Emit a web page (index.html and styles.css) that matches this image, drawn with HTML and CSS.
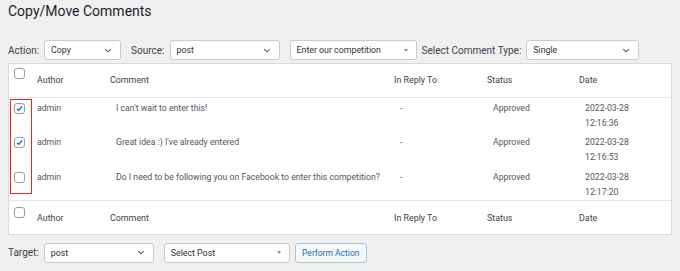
FILE: index.html
```html
<!DOCTYPE html>
<html lang="en">
<head>
    <meta charset="UTF-8">
    <title>Copy/Move Comments</title>
    <link rel="stylesheet" href="styles.css">
</head>
<body>
    <div class="wrap">
        <h1 class="page-title">Copy/Move Comments</h1>

        <div class="toolbar">
            <label class="field-label">Action:</label>
            <div class="select select-action"><span>Copy</span><svg class="chev" viewBox="0 0 10 6"><path d="M1.5 1.2 5 4.6 8.5 1.2"/></svg></div>
            <label class="field-label">Source:</label>
            <div class="select select-source"><span>post</span><svg class="chev" viewBox="0 0 10 6"><path d="M1.5 1.2 5 4.6 8.5 1.2"/></svg></div>
            <div class="select select-post"><span>Enter our competition</span><i class="tri"></i></div>
            <label class="field-label">Select Comment Type:</label>
            <div class="select select-type"><span>Single</span><svg class="chev" viewBox="0 0 10 6"><path d="M1.5 1.2 5 4.6 8.5 1.2"/></svg></div>
        </div>

        <div class="table-box">
            <table class="comments">
                <colgroup>
                    <col class="c-check">
                    <col class="c-author">
                    <col class="c-comment">
                    <col class="c-reply">
                    <col class="c-status">
                    <col>
                </colgroup>
                <thead>
                    <tr>
                        <th class="check"><span class="cb"></span></th>
                        <th>Author</th>
                        <th>Comment</th>
                        <th>In Reply To</th>
                        <th>Status</th>
                        <th>Date</th>
                    </tr>
                </thead>
                <tbody>
                    <tr>
                        <td class="check"><span class="cb checked"><svg viewBox="0 0 12 12"><path d="M2.6 6.2 5 8.4 9.6 3.4"/></svg></span></td>
                        <td class="author">admin</td>
                        <td>I can't wait to enter this!</td>
                        <td>-</td>
                        <td>Approved</td>
                        <td>2022-03-28<br>12:16:36</td>
                    </tr>
                    <tr>
                        <td class="check"><span class="cb checked"><svg viewBox="0 0 12 12"><path d="M2.6 6.2 5 8.4 9.6 3.4"/></svg></span></td>
                        <td class="author">admin</td>
                        <td>Great idea :) I've already entered</td>
                        <td>-</td>
                        <td>Approved</td>
                        <td>2022-03-28<br>12:16:53</td>
                    </tr>
                    <tr class="last">
                        <td class="check"><span class="cb"></span></td>
                        <td class="author">admin</td>
                        <td>Do I need to be following you on Facebook to enter this competition?</td>
                        <td>-</td>
                        <td>Approved</td>
                        <td>2022-03-28<br>12:17:20</td>
                    </tr>
                </tbody>
                <tfoot>
                    <tr>
                        <th class="check"><span class="cb"></span></th>
                        <th>Author</th>
                        <th>Comment</th>
                        <th>In Reply To</th>
                        <th>Status</th>
                        <th>Date</th>
                    </tr>
                </tfoot>
            </table>
            <div class="highlight"></div>
        </div>

        <div class="toolbar bottom">
            <label class="field-label">Target:</label>
            <div class="select select-target"><span>post</span><svg class="chev" viewBox="0 0 10 6"><path d="M1.5 1.2 5 4.6 8.5 1.2"/></svg></div>
            <div class="select select-dest"><span>Select Post</span><i class="tri"></i></div>
            <button type="button" class="action-btn">Perform Action</button>
        </div>
    </div>
</body>
</html>
```

FILE: styles.css
```css
body {
    margin: 0;
    background: #f0f0f1;
    font-family: Roboto, "Liberation Sans", sans-serif;
    color: #3c434a;
}
.wrap {
    padding: 0 8px;
}
.page-title {
    margin: 0;
    padding-top: 1px;
    height: 38px;
    font-size: 14px;
    font-weight: 400;
    color: #1d2327;
    line-height: 20px;
}
.toolbar {
    display: flex;
    align-items: center;
    height: 22px;
    margin-bottom: 2px;
    font-size: 10px;
    white-space: nowrap;
}
.field-label {
    color: #3c434a;
    margin-right: 5px;
}
.select {
    box-sizing: border-box;
    height: 20px;
    display: flex;
    align-items: center;
    justify-content: space-between;
    padding: 0 8px 0 6px;
    background: #fff;
    border: 1px solid #c9cbcf;
    border-radius: 3px;
    color: #2c3338;
    font-size: 8.8px;
    margin-right: 10px;
}
.chev {
    width: 8px;
    height: 5px;
    fill: none;
    stroke: #50575e;
    stroke-width: 1.3;
}
.tri {
    width: 0;
    height: 0;
    border-left: 2.5px solid transparent;
    border-right: 2.5px solid transparent;
    border-top: 3px solid #8c8f94;
}
.select-action { width: 77px; }
.select-source { width: 110px; }
.select-post { width: 127px; margin-right: 5px; }
.select-type { width: 113px; }
.select-target { width: 110px; }
.select-dest { width: 126px; margin-right: 5px; }

.table-box {
    position: relative;
    background: #fff;
    border: 1px solid #dcdcde;
    box-sizing: border-box;
    width: 664px;
}
.comments {
    width: 100%;
    border-collapse: collapse;
    table-layout: fixed;
    font-size: 8.7px;
    white-space: nowrap;
}
.c-check { width: 22px; }
.c-author { width: 73px; }
.c-comment { width: 284px; }
.c-reply { width: 93px; }
.c-status { width: 92px; }
.comments thead tr {
    height: 33px;
    border-bottom: 1px solid #e5e5e7;
}
.comments tbody tr {
    height: 35px;
}
.comments tbody tr.last {
    height: 33px;
}
.comments tfoot tr {
    height: 33px;
    border-top: 1px solid #e5e5e7;
}
.comments th {
    font-weight: 400;
    font-size: 8.9px;
    text-align: left;
    color: #3c434a;
    padding: 0 0 0 6px;
}
.comments tfoot th {
    vertical-align: top;
    padding-top: 12px;
}
.comments td {
    vertical-align: top;
    padding: 3px 0 0 12px;
    line-height: 15px;
    color: #50575e;
}
.comments td.author {
    padding-left: 6px;
}
.comments .check {
    padding: 0 0 0 5px;
}
.comments th.check {
    vertical-align: top;
    padding-top: 4px;
}
.comments tfoot th.check {
    padding-top: 6px;
}
.comments td.check {
    padding-top: 5px;
}
.cb {
    box-sizing: border-box;
    display: block;
    width: 11px;
    height: 11px;
    border: 1px solid #9a9ea4;
    border-radius: 3px;
    background: #fff;
}
.cb svg {
    display: block;
    width: 9px;
    height: 9px;
    fill: none;
    stroke: #2271b1;
    stroke-width: 1.8;
}
.highlight {
    position: absolute;
    left: 1px;
    top: 35px;
    width: 22px;
    height: 95px;
    box-sizing: border-box;
    border: 1.5px solid #e8261f;
}
.toolbar.bottom {
    margin-top: 7px;
}
.action-btn {
    box-sizing: border-box;
    height: 20px;
    width: 72px;
    padding: 0;
    background: #f6f7f7;
    border: 1px solid #a7c3de;
    border-radius: 3px;
    color: #2271b1;
    font-family: Roboto, "Liberation Sans", sans-serif;
    font-size: 8.5px;
}
```
